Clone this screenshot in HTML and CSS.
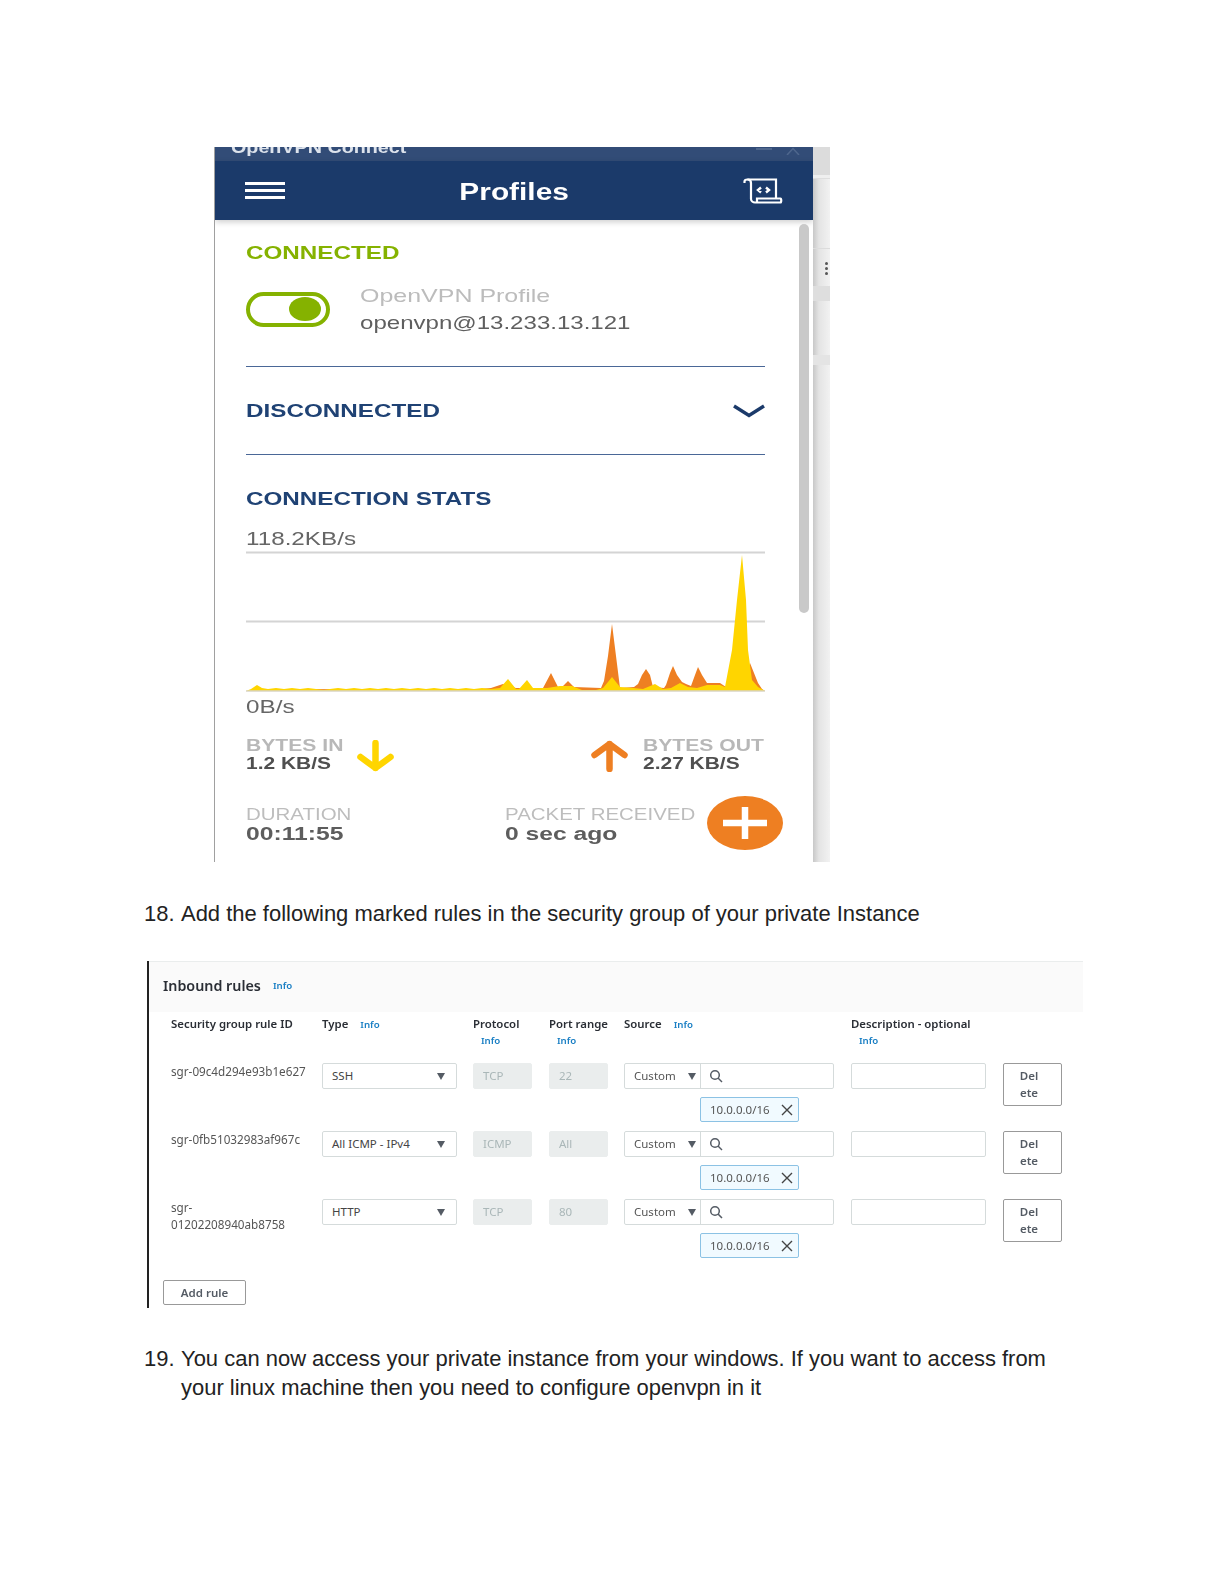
FILE: index.html
```html
<!DOCTYPE html>
<html lang="en">
<head>
<meta charset="utf-8">
<title>OpenVPN private instance</title>
<link rel="stylesheet" href="styles.css">
</head>
<body>
<div class="shot-vpn">
  <div class="vpn">
    <div class="titlebar">
      <span class="wide title-text">OpenVPN Connect</span>
      <span class="win-ctl"><i class="win-min"></i><svg width="14" height="8" viewBox="0 0 14 8" fill="none" stroke="#4f678d" stroke-width="1.500"><path d="M1 8L7 1.500L13 8"/></svg></span>
    </div>
    <header class="vpn-head">
      <div class="burger"><i></i><i></i><i></i></div>
      <div class="head-title"><span class="wide-c">Profiles</span></div>
      <svg class="scroll-icon" width="40" height="26" viewBox="0 0 40 26" fill="none" stroke="#fff" stroke-width="2.200">
        <path d="M1.500 5V3.500C1.500 2 3 1.500 4.500 1.500H33V20"/>
        <path d="M4.500 1.500C7 1.500 8 3 8 5V21C8 23 10 24.500 12 24.500H37.500C38.500 24.500 38.500 20.500 37.500 20.500H14V24"/>
        <path d="M18 9.500L15 12L18 14.500M23 9.500L26 12L23 14.500" stroke-width="2.400"/>
      </svg>
    </header>
    <div class="vpn-body">
      <h2 class="sec green"><span class="wide">CONNECTED</span></h2>
      <div class="profile">
        <div class="toggle"><b></b></div>
        <div class="prof-text">
          <div class="prof-name"><span class="wide">OpenVPN Profile</span></div>
          <div class="prof-addr"><span class="wide">openvpn@13.233.13.121</span></div>
        </div>
      </div>
      <div class="rule rule-a"></div>
      <div class="disc">
        <h2 class="sec navy"><span class="wide">DISCONNECTED</span></h2>
        <svg width="32" height="14" viewBox="0 0 32 14" fill="none" stroke="#1b3a6a" stroke-width="3.400"><path d="M1 2L16 11.500L31 2"/></svg>
      </div>
      <div class="rule"></div>
      <h2 class="sec navy stats-h"><span class="wide">CONNECTION STATS</span></h2>
      <div class="speed top"><span class="wide">118.2KB/s</span></div>
      <svg class="chart" width="519" height="142" viewBox="0 0 519 142">
        <path d="M0 1.500H519M0 70.500H519" stroke="#d4d4d4" stroke-width="2"/>
        <path fill="#ee7f22" d="M0 140L20 139L60 138L180 139L234 138L245 137L257 133L270 137L297 137L305 122L312 136L317 135L322 130L328 136L355 137L358 130L362 105L366 73L370 105L374 137L388 136L392 133L396 124L400 118L404 124L407 136L418 137L420 134L424 122L427 115L431 124L436 131L440 133L445 135L449 124L452 116L456 124L461 132L474 132L480 136L500 136L504 112L508 122L512 132L516 138L519 140Z"/>
        <path fill="#ffd500" d="M0 140L5 138L11 134L16 137L22 138L30 137L38 138L46 137L54 138L62 137L70 138L78 139L84 138L92 137L100 138L108 137L116 138L124 137L132 138L140 137L148 138L156 137L164 138L172 137L180 138L188 137L196 138L204 137L212 138L220 137L228 138L236 137L245 138L254 137L262 128L270 138L273 138L281 129L287 137L301 137L314 135L326 135L336 139L350 139L357 137L362 131L366 126L370 131L374 136L387 137L397 138L409 133L417 138L425 137L434 132L442 136L451 137L461 134L474 134L479 136L486 99L491 49L496 4L500 49L502 99L506 129L512 136L519 140Z"/>
        <path d="M0 140H519" stroke="#d8d4c4" stroke-width="1.500"/>
      </svg>
      <div class="speed bottom"><span class="wide">0B/s</span></div>
      <div class="bytes">
        <div class="byte-group">
          <div class="byte-text byte-in">
            <div class="label-b"><span class="wide">BYTES IN</span></div>
            <div class="value-b"><span class="wide">1.2 KB/S</span></div>
          </div>
          <svg width="37" height="32" viewBox="0 0 37 32" fill="none" stroke="#ffd500" stroke-width="6.500" stroke-linecap="round" stroke-linejoin="round"><path d="M18.500 3V28M3.500 17L18.500 28L33.500 17"/></svg>
        </div>
        <div class="byte-group out">
          <svg width="37" height="32" viewBox="0 0 37 32" fill="none" stroke="#ee7f22" stroke-width="6.500" stroke-linecap="round" stroke-linejoin="round"><path d="M18.500 29V4M3.500 15L18.500 4L33.500 15"/></svg>
          <div class="byte-text byte-out">
            <div class="label-b"><span class="wide">BYTES OUT</span></div>
            <div class="value-b"><span class="wide">2.27 KB/S</span></div>
          </div>
        </div>
      </div>
      <div class="meta">
        <div class="meta-a">
          <div class="label-m"><span class="wide">DURATION</span></div>
          <div class="value-m"><span class="wide">00:11:55</span></div>
        </div>
        <div>
          <div class="label-m"><span class="wide">PACKET RECEIVED</span></div>
          <div class="value-m"><span class="wide">0 sec ago</span></div>
        </div>
      </div>
    </div>
    <div class="scrollbar"></div>
    <div class="fab"><svg width="44" height="32" viewBox="0 0 44 32"><path d="M0 16H44M22 0V32" stroke="#fff" stroke-width="6.500"/></svg></div>
  </div>
  <div class="strip">
    <div class="strip-top"></div>
    <div class="strip-line s2"></div>
    <div class="kebab"><i></i><i></i><i></i></div>
    <div class="strip-chip"></div>
    <div class="strip-line s3"></div>
  </div>
</div>

<p class="step first"><span class="num">18.</span>Add the following marked rules in the security group of your private Instance</p>

<div class="shot-rules">
  <div class="rules-head"><span class="rules-title">Inbound rules</span><a class="info">Info</a></div>
  <div class="grid cols">
    <div class="th">Security group rule ID</div>
    <div class="th">Type<a class="info">Info</a></div>
    <div class="th">Protocol<a class="info block">Info</a></div>
    <div class="th">Port range<a class="info block">Info</a></div>
    <div class="th">Source<a class="info">Info</a></div>
    <div class="th">Description - optional<a class="info block">Info</a></div>
    <div></div>
  </div>

  <div class="grid row">
    <div class="rid">sgr-09c4d294e93b1e627</div>
    <div class="field sel">SSH<i class="caret"></i></div>
    <div class="field off">TCP</div>
    <div class="field off">22</div>
    <div class="src">
      <div class="src-box">
        <div class="src-type">Custom<i class="caret"></i></div>
        <div class="src-search"><svg width="14" height="14" viewBox="0 0 14 14" fill="none" stroke="#545b64" stroke-width="1.500"><circle cx="6" cy="6" r="4.300"/><path d="M9 9L13 13"/></svg></div>
      </div>
      <div class="chip">10.0.0.0/16<svg width="12" height="12" viewBox="0 0 12 12" fill="none" stroke="#444" stroke-width="1.400"><path d="M1 1L11 11M11 1L1 11"/></svg></div>
    </div>
    <div class="field desc"></div>
    <div class="del">Del<br>ete</div>
  </div>

  <div class="grid row">
    <div class="rid">sgr-0fb51032983af967c</div>
    <div class="field sel">All ICMP - IPv4<i class="caret"></i></div>
    <div class="field off">ICMP</div>
    <div class="field off">All</div>
    <div class="src">
      <div class="src-box">
        <div class="src-type">Custom<i class="caret"></i></div>
        <div class="src-search"><svg width="14" height="14" viewBox="0 0 14 14" fill="none" stroke="#545b64" stroke-width="1.500"><circle cx="6" cy="6" r="4.300"/><path d="M9 9L13 13"/></svg></div>
      </div>
      <div class="chip">10.0.0.0/16<svg width="12" height="12" viewBox="0 0 12 12" fill="none" stroke="#444" stroke-width="1.400"><path d="M1 1L11 11M11 1L1 11"/></svg></div>
    </div>
    <div class="field desc"></div>
    <div class="del">Del<br>ete</div>
  </div>

  <div class="grid row">
    <div class="rid">sgr-<br>01202208940ab8758</div>
    <div class="field sel">HTTP<i class="caret"></i></div>
    <div class="field off">TCP</div>
    <div class="field off">80</div>
    <div class="src">
      <div class="src-box">
        <div class="src-type">Custom<i class="caret"></i></div>
        <div class="src-search"><svg width="14" height="14" viewBox="0 0 14 14" fill="none" stroke="#545b64" stroke-width="1.500"><circle cx="6" cy="6" r="4.300"/><path d="M9 9L13 13"/></svg></div>
      </div>
      <div class="chip">10.0.0.0/16<svg width="12" height="12" viewBox="0 0 12 12" fill="none" stroke="#444" stroke-width="1.400"><path d="M1 1L11 11M11 1L1 11"/></svg></div>
    </div>
    <div class="field desc"></div>
    <div class="del">Del<br>ete</div>
  </div>

  <div class="add">Add rule</div>
</div>

<p class="step second"><span class="num">19.</span>You can now access your private instance from your windows. If you want to access from your linux machine then you need to configure openvpn in it</p>
</body>
</html>
```
FILE: styles.css
```css
* { box-sizing: border-box; }
html, body { margin: 0; padding: 0; background: #fff; }
body { padding-top: 147px; width: 1224px; height: 1584px; overflow: hidden; font-family: "Liberation Sans", Arial, sans-serif; }

/* ---------- OpenVPN screenshot ---------- */
.shot-vpn { display: flex; width: 616px; height: 715px; margin-left: 214px; overflow: hidden; filter: blur(.5px); }
.vpn { position: relative; width: 599px; height: 715px; border-left: 1px solid #a0a0a0; overflow: hidden; background: #fff; }
.wide { display: inline-block; transform: scaleX(var(--sx, 1.2)); transform-origin: left center; white-space: nowrap; }
.wide-c { display: inline-block; transform: scaleX(var(--sx, 1.2)); white-space: nowrap; }

.titlebar { --sx: 1.16; display: flex; justify-content: space-between; height: 14px; background: #324c77; padding: 0 13px 0 16px; overflow: hidden; color: #dde3ec; font-size: 17px; font-weight: 700; line-height: 14px; }
.title-text { margin-top: -6px; height: 20px; }
.win-ctl { display: flex; align-items: flex-start; gap: 14px; }
.win-min { display: block; width: 16px; height: 2px; margin-top: 1px; background: #4f678d; }
.vpn-head { display: flex; align-items: center; justify-content: space-between; height: 59px; padding: 0 30px; background: #1b3a6a; box-shadow: 0 2px 6px rgba(0,0,0,.2); position: relative; }
.burger { display: flex; flex-direction: column; gap: 4px; width: 40px; }
.burger i { display: block; height: 3px; background: #fff; }
.head-title { --sx: 1.27; flex: 1; text-align: center; color: #fff; font-size: 23.500px; font-weight: 700; padding: 3px 0 0 0; }
.scroll-icon { display: block; }

.vpn-body { padding: 23px 0 0 31px; width: 550px; color: #666; }
.sec { --sx: 1.31; margin: 0; font-size: 18.500px; line-height: 20px; font-weight: 700; }
.green { color: #85b200; }
.navy { color: #1f4274; }
.profile { display: flex; align-items: center; gap: 30px; margin-top: 20px; height: 52px; }
.toggle { display: flex; align-items: center; justify-content: flex-end; width: 84px; height: 35px; border: 4px solid #85b200; border-radius: 18px; padding-right: 5px; }
.toggle b { display: block; width: 32px; height: 24px; border-radius: 50%; background: #85b200; }
.prof-text { font-size: 18.500px; line-height: 27px; }
.prof-name { --sx: 1.35; color: #bcbcbc; }
.prof-addr { --sx: 1.3; color: #5f5f5f; }
.rule { height: 1px; background: #4a6797; }
.rule-a { margin-top: 31px; }
.disc { display: flex; align-items: center; justify-content: space-between; height: 87px; }
.stats-h { margin-top: 34px; }
.speed { --sx: 1.31; font-size: 18.500px; line-height: 20px; color: #666; }
.speed.top { margin-top: 20px; }
.chart { display: block; margin-top: 2px; }
.speed.bottom { margin-top: 4px; }
.bytes { display: flex; justify-content: space-between; margin-top: 19px; }
.byte-group { display: flex; align-items: flex-start; }
.byte-group svg { margin-top: 4px; flex: none; }
.byte-text { line-height: 18px; font-weight: 700; font-size: 16.500px; }
.byte-in { width: 111px; }
.byte-out { width: 122px; margin-left: 15px; }
.label-b { --sx: 1.28; color: #b8b8b8; }
.value-b { --sx: 1.27; color: #4f4f4f; }
.meta { display: flex; margin-top: 32px; line-height: 20px; }
.meta-a { width: 259px; }
.label-m { --sx: 1.24; font-size: 16.500px; color: #bdbdbd; }
.value-m { --sx: 1.37; font-size: 18px; font-weight: 700; color: #5d5d5d; }

.scrollbar { position: absolute; left: 584px; top: 77px; width: 10px; height: 389px; border-radius: 5px; background: #c9c9c9; }
.fab { position: absolute; left: 492px; top: 649px; display: flex; align-items: center; justify-content: center; width: 76px; height: 54px; border-radius: 50%; background: #ee7f22; }

.strip { width: 17px; height: 715px; background: linear-gradient(to right, #c8c8c8, #e4e4e4 6px, #f2f2f2); }
.strip-top { height: 32px; background: linear-gradient(#dcdcdc 28px, #efefef 28px); border-bottom: 1px solid #dedede; }
.strip-line { height: 1px; background: #dcdcdc; }
.s2 { margin-top: 69px; }
.kebab { display: flex; flex-direction: column; gap: 2px; margin: 13px 0 0 12px; }
.kebab i { display: block; width: 3px; height: 3px; border-radius: 50%; background: #555; }
.strip-chip { height: 15px; margin-top: 11px; background: #dedede; }
.s3 { height: 10px; margin-top: 54px; background: #e4e4e4; }

/* ---------- Body text ---------- */
.step { position: relative; margin: 0 0 0 181px; width: 880px; padding: 0; font-size: 21.970px; line-height: 29px; color: #222; }
.num { position: absolute; left: -37px; }
.first { margin-top: 37px; }
.second { margin-top: 36px; }

/* ---------- Inbound rules screenshot ---------- */
.shot-rules { width: 936px; height: 347px; margin: 33px 0 0 147px; border-left: 2px solid #222; font-family: "Noto Sans", "Open Sans", sans-serif; font-size: 12px; color: #2a2e35; filter: blur(.5px); }
.rules-head { display: flex; align-items: center; height: 51px; padding: 0 0 3px 14px; background: #fafafa; border-top: 1px solid #eaeded; }
.rules-title { font-size: 14.300px; font-weight: 600; }
.info { margin-left: 12px; color: #1a7fc4; font-size: 9.700px; font-weight: 600; }
.info.block { display: block; margin: 0 0 0 8px; }
.grid { display: grid; grid-template-columns: 151px 151px 76px 75px 227px 152px 60px; padding-left: 22px; }
.cols { height: 51px; padding-top: 3px; line-height: 17px; }
.th { font-size: 11.400px; font-weight: 600; white-space: nowrap; }
.row { height: 68px; align-items: start; }
.rid { font-size: 11.700px; line-height: 17px; color: #555; white-space: nowrap; }
.field { position: relative; height: 26px; line-height: 24px; padding-left: 9px; border: 1px solid #d5dbdb; border-radius: 2px; background: #fff; white-space: nowrap; font-size: 11.500px; color: #444; }
.sel { width: 135px; }
.off { width: 59px; background: #eaeded; color: #aab7b8; border-color: #eaeded; }
.desc { width: 135px; }
.caret { position: absolute; right: 11px; top: 9px; width: 0; height: 0; border-left: 4.500px solid transparent; border-right: 4.500px solid transparent; border-top: 7px solid #545b64; }
.src { width: 210px; }
.src-box { display: flex; height: 26px; border: 1px solid #d5dbdb; border-radius: 2px; }
.src-type { position: relative; width: 76px; padding-left: 9px; line-height: 24px; font-size: 11.500px; color: #555; border-right: 1px solid #d5dbdb; }
.src-type .caret { right: 4px; }
.src-search { display: flex; align-items: center; padding-left: 8px; }
.chip { display: flex; align-items: center; justify-content: space-between; width: 99px; height: 25px; margin: 8px 0 0 76px; padding: 0 5px 0 9px; font-size: 11.500px; color: #555; background: #f1faff; border: 1px solid #8cc2e4; border-radius: 2px; }
.del { width: 59px; height: 43px; padding: 3px 7px 0 0; text-align: center; line-height: 17px; font-size: 11.500px; font-weight: 600; color: #545b64; border: 1px solid #999; border-radius: 2px; }
.add { width: 83px; height: 25px; margin: 13px 0 0 14px; text-align: center; line-height: 23px; font-size: 11.500px; font-weight: 600; color: #545b64; border: 1px solid #999; border-radius: 2px; }
```
